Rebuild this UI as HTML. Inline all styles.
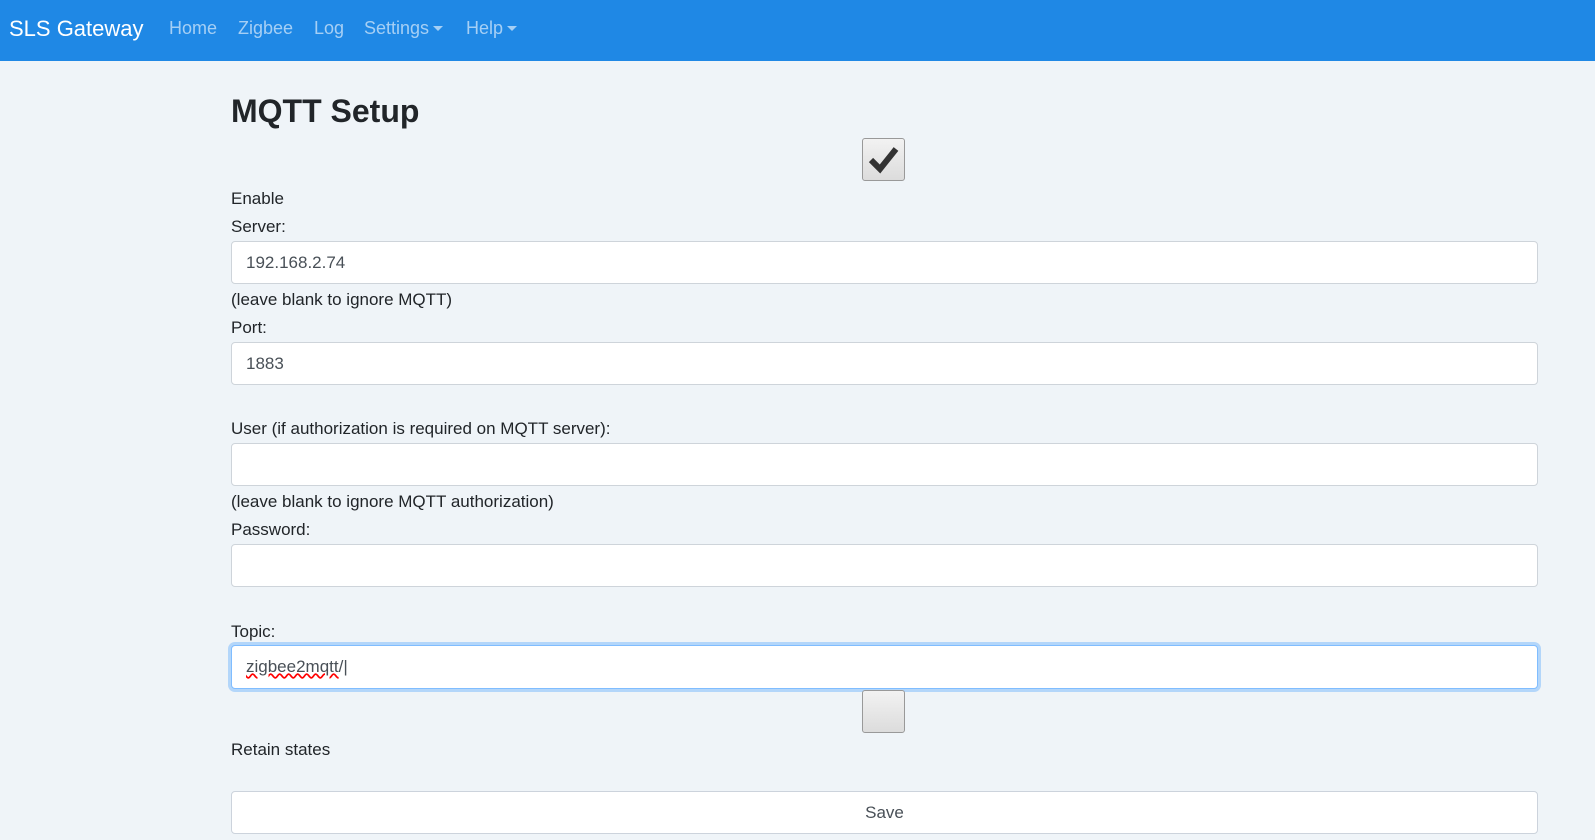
<!DOCTYPE html>
<html><head><style>
body{margin:0;width:1595px;height:840px;background:#eff4f8;font-family:"Segoe UI","Liberation Sans",sans-serif;color:#212529;overflow:hidden;position:relative}
.nav{position:absolute;left:0;top:0;width:1595px;height:61px;background:#1f88e5}
.nav span{position:absolute;top:18px;font-size:18px;color:rgba(255,255,255,.6)}
.nav .brand{color:#fff;font-size:22px;top:16px;left:9px}
.caret{display:inline-block;width:0;height:0;border-left:5px solid transparent;border-right:5px solid transparent;border-top:5px solid rgba(255,255,255,.6);vertical-align:3px;margin-left:4px}
.t{position:absolute;left:231px;font-size:17px;line-height:20px}
.in{position:absolute;left:231px;width:1307px;height:43px;background:#fff;border:1px solid #ced4da;border-radius:4px;box-sizing:border-box;font-size:17px;padding:11px 14px;color:#495057}
.cb{position:absolute;left:862px;width:43px;height:43px;box-sizing:border-box;border:1px solid #999;border-radius:3px;background:linear-gradient(#f2f2f2,#dcdcdc)}
</style></head><body>
<div class="nav">
<span class="brand">SLS Gateway</span>
<span style="left:169px">Home</span>
<span style="left:238px">Zigbee</span>
<span style="left:314px">Log</span>
<span style="left:364px">Settings<i class="caret"></i></span>
<span style="left:466px">Help<i class="caret"></i></span>
</div>
<div class="t" style="top:91px;font-size:32px;line-height:40px;font-weight:bold">MQTT Setup</div>
<div class="cb" style="top:138px"><svg width="41" height="41" viewBox="0 0 41 41"><path d="M8 21 L17 30 L33 10" fill="none" stroke="#333" stroke-width="6"/></svg></div>
<div class="t" style="top:189px">Enable</div>
<div class="t" style="top:217px">Server:</div>
<div class="in" style="top:241px">192.168.2.74</div>
<div class="t" style="top:290px">(leave blank to ignore MQTT)</div>
<div class="t" style="top:318px">Port:</div>
<div class="in" style="top:342px">1883</div>
<div class="t" style="top:419px">User (if authorization is required on MQTT server):</div>
<div class="in" style="top:443px"></div>
<div class="t" style="top:492px">(leave blank to ignore MQTT authorization)</div>
<div class="t" style="top:520px">Password:</div>
<div class="in" style="top:544px"></div>
<div class="t" style="top:622px">Topic:</div>
<div class="in" style="top:645px;height:44px;border-color:#80bdff;box-shadow:0 0 0 3px rgba(0,123,255,.25)"><span style="text-decoration:underline wavy red">zigbee2mqtt</span>/|</div>
<div class="cb" style="top:690px"></div>
<div class="t" style="top:740px">Retain states</div>
<div class="in" style="top:791px;height:43px;text-align:center;border-color:#ccd3dc">Save</div>
</body></html>
